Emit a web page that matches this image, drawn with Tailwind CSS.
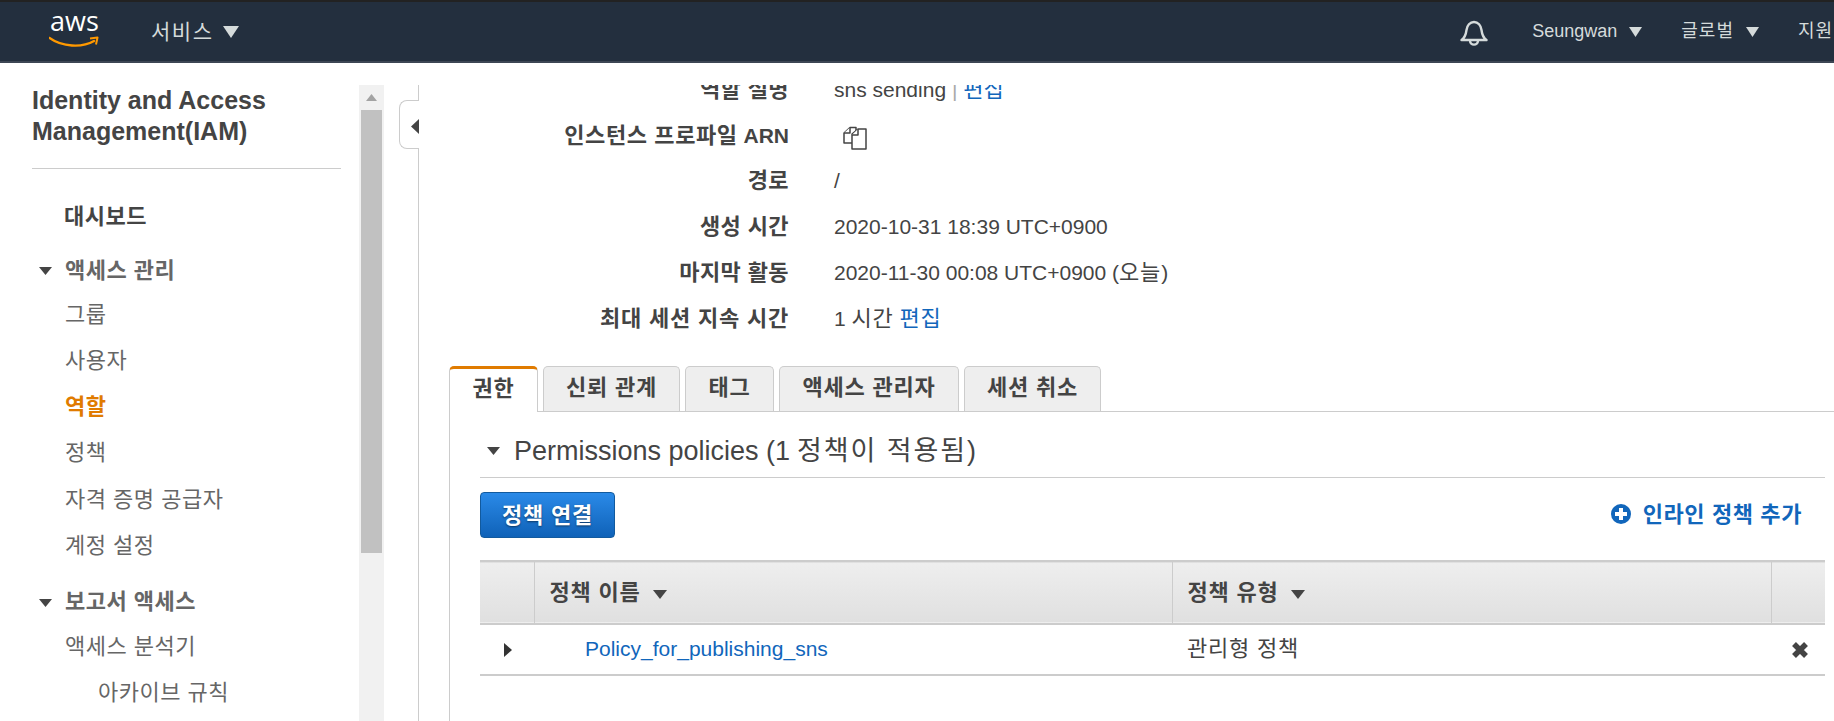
<!DOCTYPE html>
<html lang="ko">
<head>
    <meta charset="UTF-8">
    <title>IAM Management Console</title>
    <script src="https://cdn.jsdelivr.net/npm/@tailwindcss/browser@4"></script>
</head>
<body class="h-[721px] w-[1834px] overflow-hidden bg-white text-[21px] text-[#444] font-['Liberation_Sans','Noto_Sans_CJK_KR',sans-serif]">

<!-- top nav -->
<header class="h-[63px] flex items-center border-t-2 border-b-2 border-t-[#222] border-b-[#3d4654] bg-[#232f3e] text-[18px] text-[#d5dbdb]">
    <a class="relative block ml-[49px] w-[51px] h-[40px]">
        <span class="block text-center text-[27px] leading-[26px] font-['Open_Sans',sans-serif] text-white -mt-[4px]">aws</span>
        <svg class="absolute left-0 top-[24px]" width="50" height="14" viewBox="0 0 50 14" fill="none">
            <path d="M0.5 2 C13 11 33 12 45 5" stroke="#f90" stroke-width="2.4" stroke-linecap="round"/>
            <path d="M41 2.5 L48.5 1.5 L47 8.5" stroke="#f90" stroke-width="2" stroke-linejoin="round" fill="none"/>
        </svg>
    </a>
    <span class="ml-[51px] text-[21px] tracking-[1.5px]">서비스</span>
    <svg class="ml-[10px]" width="16" height="12" viewBox="0 0 16 12"><path d="M0 0h16L8 12z" fill="#d5dbdb"/></svg>

    <svg class="ml-auto mt-[2px]" width="28" height="28" viewBox="0 0 28 28" fill="none" stroke="#d5dbdb" stroke-width="2.400">
        <path d="M1.500 21 C5.500 18.500 6 15 6.500 11 C7 6.500 10 3 14 3 C18 3 21 6.500 21.500 11 C22 15 22.500 18.500 26.500 21 Z" stroke-linejoin="round"/>
        <path d="M10 21.500 C10 27 18 27 18 21.500"/>
    </svg>
    <span class="ml-[44px]">Seungwan</span>
    <svg class="ml-[12px]" width="13" height="10" viewBox="0 0 13 10"><path d="M0 0h13L6.500 10z" fill="#d5dbdb"/></svg>
    <span class="ml-[39px] tracking-[1px]">글로벌</span>
    <svg class="ml-[12px]" width="13" height="10" viewBox="0 0 13 10"><path d="M0 0h13L6.500 10z" fill="#d5dbdb"/></svg>
    <span class="ml-[39px] w-[36px] overflow-hidden whitespace-nowrap tracking-[1px]">지원</span>
</header>

<div class="relative flex h-[658px] overflow-hidden">
    <!-- left nav -->
    <aside class="w-[359px] shrink-0 pl-[32px] pt-[22px]">
        <h1 class="text-[25px] leading-[31px] font-bold text-[#444]">Identity and Access Management(IAM)</h1>
        <hr class="mt-[21px] w-[309px] border-[#ccc]">
        <nav class="text-[22px] tracking-[0.5px] leading-[46.300px] text-[#666]">
            <div class="mt-[25px] pl-[32px] font-bold text-[#444]">대시보드</div>
            <div class="mt-[8px] flex items-center font-bold text-[#666]">
                <svg class="ml-[7px] mr-[13px]" width="13" height="8" viewBox="0 0 13 8"><path d="M0 0h13L6.500 8z" fill="#444"/></svg>액세스 관리
            </div>
            <ul class="pl-[33px]">
                <li class="-mt-[3px]">그룹</li>
                <li>사용자</li>
                <li class="font-bold text-[#e07b00]">역할</li>
                <li>정책</li>
                <li>자격 증명 공급자</li>
                <li>계정 설정</li>
            </ul>
            <div class="mt-[10px] flex items-center font-bold text-[#666]">
                <svg class="ml-[7px] mr-[13px]" width="13" height="8" viewBox="0 0 13 8"><path d="M0 0h13L6.500 8z" fill="#444"/></svg>보고서 액세스
            </div>
            <ul class="pl-[33px] -mt-[2px]">
                <li>액세스 분석기</li>
                <li class="pl-[33px]">아카이브 규칙</li>
            </ul>
        </nav>
    </aside>

    <!-- nav scrollbar -->
    <div class="w-[25px] shrink-0 mt-[22px] px-[2px] bg-[#f1f1f1]">
        <div class="h-[25px] flex items-center justify-center">
            <svg width="11" height="7" viewBox="0 0 11 7"><path d="M5.500 0L11 7H0z" fill="#a3a3a3"/></svg>
        </div>
        <div class="h-[443px] bg-[#c1c1c1]"></div>
    </div>

    <!-- collapse handle + divider -->
    <div class="relative w-[35px] shrink-0 mt-[22px] border-r border-[#ccc]">
        <div class="absolute left-[15px] top-[15px] w-[20px] h-[49px] flex items-center justify-end rounded-l-[8px] border border-r-0 border-[#ccc] bg-white">
            <svg class="mt-[4px]" width="8" height="15" viewBox="0 0 8 15"><path d="M8 0v15L0 7.500z" fill="#444"/></svg>
        </div>
    </div>

    <!-- main content -->
    <main class="flex-1 min-w-0 mt-[22px] overflow-hidden">
        <dl class="-mt-[18px] pl-[30px] leading-[45.700px]">
            <div class="flex"><dt class="w-[340px] text-right font-bold text-[22px] tracking-[0.4px]">역할 설명</dt><dd class="ml-[45px]">sns sending <span class="text-[#aaa]">|</span> <a class="text-[#16b] text-[22px]">편집</a></dd></div>
            <div class="flex items-center"><dt class="w-[340px] text-right font-bold"><span class="text-[22px] tracking-[0.6px]">인스턴스 프로파일</span> ARN</dt><dd class="ml-[45px] pl-[9px]">
                <svg class="mt-[5px]" width="25" height="25" viewBox="0 0 25 25" fill="#fff" stroke="#444" stroke-width="1.500" stroke-linejoin="round">
                    <path d="M1 7 L7 1.500 H13 V17 H1 Z"/>
                    <path d="M7 1.500 V7 H1"/>
                    <path d="M9 8 L15 3 H23 V23 H9 Z"/>
                    <path d="M15 3 V9 H9"/>
                </svg>
            </dd></div>
            <div class="flex"><dt class="w-[340px] text-right font-bold text-[22px] tracking-[0.4px]">경로</dt><dd class="ml-[45px]">/</dd></div>
            <div class="flex"><dt class="w-[340px] text-right font-bold text-[22px] tracking-[0.4px]">생성 시간</dt><dd class="ml-[45px]">2020-10-31 18:39 UTC+0900</dd></div>
            <div class="flex"><dt class="w-[340px] text-right font-bold text-[22px] tracking-[0.4px]">마지막 활동</dt><dd class="ml-[45px]">2020-11-30 00:08 UTC+0900 (<span class="text-[22px] tracking-[0.8px]">오늘</span>)</dd></div>
            <div class="flex"><dt class="w-[340px] text-right font-bold text-[22px] tracking-[0.8px]">최대 세션 지속 시간</dt><dd class="ml-[45px]">1 <span class="text-[22px] tracking-[0.8px]">시간</span> <a class="text-[#16b] text-[22px] tracking-[0.8px]">편집</a></dd></div>
        </dl>

        <!-- tabs -->
        <div class="relative mt-[25px] ml-[30px] flex h-[46px] gap-[5px] border-b border-[#ccc] font-bold text-[22px] tracking-[0.8px]">
            <div class="relative z-10 w-[89px] h-[46px] pb-[4px] flex items-center justify-center rounded-t-[5px] border-x border-t-[3px] border-x-[#ccc] border-t-[#e07b00] bg-white">권한</div>
            <div class="w-[137px] h-[45px] pb-[3px] flex items-center justify-center rounded-t-[5px] border border-b-0 border-[#ccc] bg-[#eee]">신뢰 관계</div>
            <div class="w-[89px] h-[45px] pb-[3px] flex items-center justify-center rounded-t-[5px] border border-b-0 border-[#ccc] bg-[#eee]">태그</div>
            <div class="w-[180px] h-[45px] pb-[3px] flex items-center justify-center rounded-t-[5px] border border-b-0 border-[#ccc] bg-[#eee]">액세스 관리자</div>
            <div class="w-[137px] h-[45px] pb-[3px] flex items-center justify-center rounded-t-[5px] border border-b-0 border-[#ccc] bg-[#eee]">세션 취소</div>
        </div>

        <!-- tab panel -->
        <section class="ml-[30px] h-[320px] border-l border-[#ccc] pl-[30px] pr-[9px]">
            <div class="h-[66px] pt-[13px] flex items-center border-b border-[#ccc] text-[27px]">
                <svg class="ml-[7px] mr-[14px]" width="13" height="8" viewBox="0 0 13 8"><path d="M0 0h13L6.500 8z" fill="#444"/></svg>Permissions policies (1 <span class="ml-[7px] tracking-[1.9px]">정책이 적용됨</span>)
            </div>
            <div class="mt-[14px] flex items-center justify-between">
                <button class="w-[135px] h-[46px] rounded-[4px] border border-[#125a9e] bg-gradient-to-b from-[#2a8ae8] to-[#0f62b8] text-[22px] tracking-[0.8px] font-bold text-white [text-shadow:0_1px_2px_rgba(0,0,0,0.5)]">정책 연결</button>
                <a class="mr-[23px] -mt-[2px] flex items-center gap-[12px] text-[22px] tracking-[0.6px] font-bold text-[#16b]">
                    <svg width="20" height="20" viewBox="0 0 20 20"><circle cx="10" cy="10" r="10" fill="#16b"/><path d="M8 4h4v4h4v4h-4v4H8v-4H4V8h4z" fill="#fff"/></svg>인라인 정책 추가
                </a>
            </div>

            <!-- policy table -->
            <table class="mt-[22px] w-full table-fixed border-collapse">
                <thead>
                    <tr class="h-[63px] border-y-2 border-[#ccc] bg-gradient-to-b from-[#eee] to-[#e0e0e0] text-left text-[22px] tracking-[0.8px] font-bold">
                        <th class="w-[54px] border-r border-[#ccc]"></th>
                        <th class="w-[638px] border-r border-[#ccc] pl-[15px] font-bold">정책 이름<svg class="inline ml-[12px]" width="14" height="9" viewBox="0 0 14 9"><path d="M0 0h14L7 9z" fill="#444"/></svg></th>
                        <th class="border-r border-[#ccc] pl-[15px] font-bold">정책 유형<svg class="inline ml-[12px]" width="14" height="9" viewBox="0 0 14 9"><path d="M0 0h14L7 9z" fill="#444"/></svg></th>
                        <th class="w-[54px]"></th>
                    </tr>
                </thead>
                <tbody>
                    <tr class="h-[51px] border-b-2 border-[#ccc]">
                        <td><svg class="ml-[24px]" width="8" height="14" viewBox="0 0 8 14"><path d="M0 0l8 7-8 7z" fill="#333"/></svg></td>
                        <td class="pl-[51px] pb-[2px] text-[#16b]">Policy_for_publishing_sns</td>
                        <td class="pl-[15px] pb-[2px] text-[22px] tracking-[0.8px]">관리형 정책</td>
                        <td><svg class="ml-[20px]" width="18" height="18" viewBox="0 0 18 18"><path d="M3 3L15 15M15 3L3 15" stroke="#444" stroke-width="5.500"/></svg></td>
                    </tr>
                </tbody>
            </table>
        </section>
    </main>
</div>
</body>
</html>
